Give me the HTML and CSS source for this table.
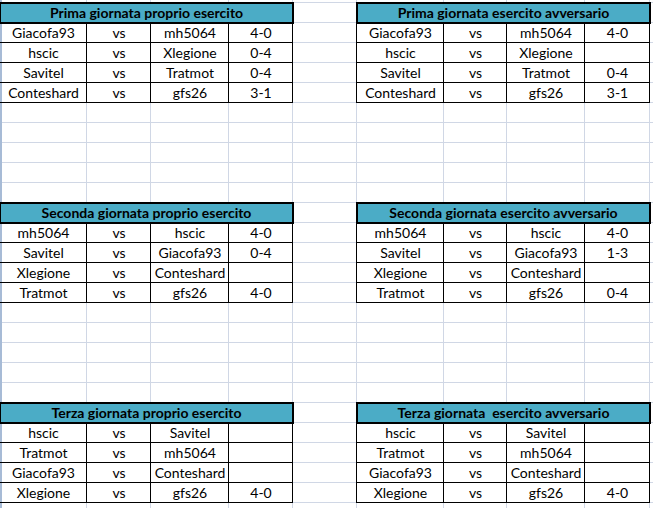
FILE: index.html
```html
<!DOCTYPE html>
<html lang="it">
<head>
<meta charset="utf-8">
<title>Giornate</title>
<link rel="stylesheet" href="styles.css">
</head>
<body>
<div class="sheet">
  <section class="block left r1">
    <div class="head">Prima giornata proprio esercito</div>
    <div class="c first">Giacofa93</div><div class="c">vs</div><div class="c">mh5064</div><div class="c">4-0</div>
    <div class="c first">hscic</div><div class="c">vs</div><div class="c">Xlegione</div><div class="c">0-4</div>
    <div class="c first">Savitel</div><div class="c">vs</div><div class="c">Tratmot</div><div class="c">0-4</div>
    <div class="c first">Conteshard</div><div class="c">vs</div><div class="c">gfs26</div><div class="c">3-1</div>
  </section>
  <section class="block right r1">
    <div class="head">Prima giornata esercito avversario</div>
    <div class="c first">Giacofa93</div><div class="c">vs</div><div class="c">mh5064</div><div class="c">4-0</div>
    <div class="c first">hscic</div><div class="c">vs</div><div class="c">Xlegione</div><div class="c"></div>
    <div class="c first">Savitel</div><div class="c">vs</div><div class="c">Tratmot</div><div class="c">0-4</div>
    <div class="c first">Conteshard</div><div class="c">vs</div><div class="c">gfs26</div><div class="c">3-1</div>
  </section>

  <section class="block left r2">
    <div class="head">Seconda giornata proprio esercito</div>
    <div class="c first">mh5064</div><div class="c">vs</div><div class="c">hscic</div><div class="c">4-0</div>
    <div class="c first">Savitel</div><div class="c">vs</div><div class="c">Giacofa93</div><div class="c">0-4</div>
    <div class="c first">Xlegione</div><div class="c">vs</div><div class="c">Conteshard</div><div class="c"></div>
    <div class="c first">Tratmot</div><div class="c">vs</div><div class="c">gfs26</div><div class="c">4-0</div>
  </section>
  <section class="block right r2">
    <div class="head">Seconda giornata esercito avversario</div>
    <div class="c first">mh5064</div><div class="c">vs</div><div class="c">hscic</div><div class="c">4-0</div>
    <div class="c first">Savitel</div><div class="c">vs</div><div class="c">Giacofa93</div><div class="c">1-3</div>
    <div class="c first">Xlegione</div><div class="c">vs</div><div class="c">Conteshard</div><div class="c"></div>
    <div class="c first">Tratmot</div><div class="c">vs</div><div class="c">gfs26</div><div class="c">0-4</div>
  </section>

  <section class="block left r3">
    <div class="head">Terza giornata proprio esercito</div>
    <div class="c first">hscic</div><div class="c">vs</div><div class="c">Savitel</div><div class="c"></div>
    <div class="c first">Tratmot</div><div class="c">vs</div><div class="c">mh5064</div><div class="c"></div>
    <div class="c first">Giacofa93</div><div class="c">vs</div><div class="c">Conteshard</div><div class="c"></div>
    <div class="c first">Xlegione</div><div class="c">vs</div><div class="c">gfs26</div><div class="c">4-0</div>
  </section>
  <section class="block right r3">
    <div class="head">Terza giornata  esercito avversario</div>
    <div class="c first">hscic</div><div class="c">vs</div><div class="c">Savitel</div><div class="c"></div>
    <div class="c first">Tratmot</div><div class="c">vs</div><div class="c">mh5064</div><div class="c"></div>
    <div class="c first">Giacofa93</div><div class="c">vs</div><div class="c">Conteshard</div><div class="c"></div>
    <div class="c first">Xlegione</div><div class="c">vs</div><div class="c">gfs26</div><div class="c">4-0</div>
  </section>
</div>
</body>
</html>
```
FILE: styles.css
```css
html, body {
  margin: 0;
  padding: 0;
  background: #ffffff;
}

body {
  width: 653px;
  height: 508px;
  overflow: hidden;
  font-family: Lato, "Open Sans", sans-serif;
  font-size: 14px;
  color: #000;
}

.sheet {
  display: grid;
  grid-template-columns: 87px 64px 78px 64px 64px 87px 63px 78px 65px 1fr;
  grid-template-rows: repeat(26, 20px);
  padding-top: 3px;
  height: 505px;
  overflow: hidden;
  background-image:
    linear-gradient(to bottom, transparent 0 19px, #d0d7e5 19px 20px),
    linear-gradient(to right,
      transparent 0 86px, #d0d7e5 86px 87px,
      transparent 87px 150px, #d0d7e5 150px 151px,
      transparent 151px 228px, #d0d7e5 228px 229px,
      transparent 229px 292px, #d0d7e5 292px 293px,
      transparent 293px 356px, #d0d7e5 356px 357px,
      transparent 357px 443px, #d0d7e5 443px 444px,
      transparent 444px 506px, #d0d7e5 506px 507px,
      transparent 507px 584px, #d0d7e5 584px 585px,
      transparent 585px 649px, #d0d7e5 649px 650px,
      transparent 650px);
  background-size: 100% 20px, 100% 100%;
  background-repeat: repeat-y, no-repeat;
  background-origin: content-box, border-box;
  box-shadow: inset 2px 0 0 #a7bbd6;
}

.block {
  display: grid;
  grid-auto-rows: 20px;
}

.left {
  grid-column: 1 / 5;
  grid-template-columns: 87px 64px 78px 64px;
}

.right {
  grid-column: 6 / 10;
  grid-template-columns: 87px 63px 78px 65px;
}

.r1 { grid-row: 1 / 6; }
.r2 { grid-row: 11 / 16; }
.r3 { grid-row: 21 / 26; }

.head {
  grid-column: 1 / -1;
  background: #4bacc6;
  font-weight: 700;
  text-align: center;
  line-height: 19px;
  white-space: pre;
  box-shadow: 0 0 0 1px #000, inset 0 0 0 1px #000;
  position: relative;
  z-index: 1;
}

.c {
  text-align: center;
  line-height: 19px;
  white-space: nowrap;
  box-shadow: inset -1px -1px 0 #000;
}

.c.first {
  box-shadow: inset -1px -1px 0 #000, -1px 0 0 #000;
}
```
